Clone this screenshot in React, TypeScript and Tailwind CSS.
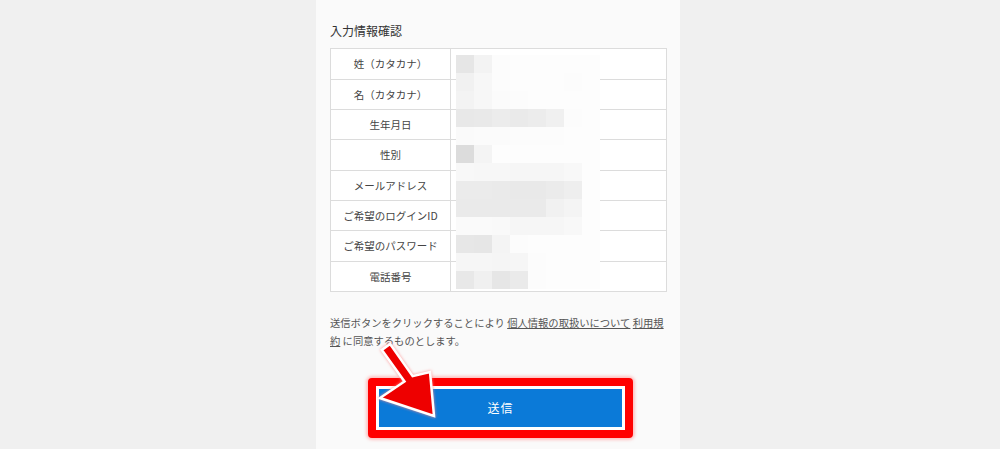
import React from "react";

const rows: { label: string; h: string }[] = [
  { label: "姓（カタカナ）", h: "h-[30px]" },
  { label: "名（カタカナ）", h: "h-[29px]" },
  { label: "生年月日", h: "h-[29px]" },
  { label: "性別", h: "h-[30px]" },
  { label: "メールアドレス", h: "h-[29px]" },
  { label: "ご希望のログインID", h: "h-[29px]" },
  { label: "ご希望のパスワード", h: "h-[30px]" },
  { label: "電話番号", h: "h-[29px]" },
];

const mosaic: string[][] = [
  ["#e6e6e6", "#f3f3f3", "#fcfcfc", "#fdfdfd", "#fdfdfd", "#fdfdfd", "#fdfdfd", "#fdfdfd"],
  ["#f1f1f1", "#f7f7f7", "#fcfcfc", "#fdfdfd", "#fdfdfd", "#fdfdfd", "#fcfcfc", "#fdfdfd"],
  ["#f3f3f3", "#f7f7f7", "#fbfbfb", "#fcfcfc", "#fdfdfd", "#fdfdfd", "#fdfdfd", "#fdfdfd"],
  ["#e8e8e8", "#e9e9e9", "#ececec", "#eaeaea", "#ececec", "#f0f0f0", "#fcfcfc", "#fdfdfd"],
  ["#fafafa", "#fbfbfb", "#fbfbfb", "#fcfcfc", "#fcfcfc", "#fcfcfc", "#fdfdfd", "#fdfdfd"],
  ["#dcdcdc", "#f4f4f4", "#fdfdfd", "#fdfdfd", "#fdfdfd", "#fdfdfd", "#fdfdfd", "#fdfdfd"],
  ["#f8f8f8", "#f7f7f7", "#f7f7f7", "#f6f6f6", "#f6f6f6", "#f6f6f6", "#f8f8f8", "#fdfdfd"],
  ["#ebebeb", "#ebebeb", "#eaeaea", "#e9e9e9", "#e9e9e9", "#ebebeb", "#eeeeee", "#fdfdfd"],
  ["#eaeaea", "#eaeaea", "#eaeaea", "#eaeaea", "#eaeaea", "#f1f1f1", "#f4f4f4", "#fdfdfd"],
  ["#fafafa", "#fafafa", "#f9f9f9", "#f6f6f6", "#f6f6f6", "#f6f6f6", "#f8f8f8", "#fdfdfd"],
  ["#e7e7e7", "#e6e6e6", "#f4f4f4", "#fcfcfc", "#fdfdfd", "#fdfdfd", "#fdfdfd", "#fdfdfd"],
  ["#f6f6f6", "#f6f6f6", "#f5f5f5", "#f6f6f6", "#fcfcfc", "#fdfdfd", "#fdfdfd", "#fdfdfd"],
  ["#e8e8e8", "#f0f0f0", "#e6e6e6", "#eaeaea", "#fcfcfc", "#fdfdfd", "#fdfdfd", "#fdfdfd"],
];

export default function App() {
  return (
    <div
      className="relative w-full h-[449px] overflow-hidden bg-[#f0f0f0]"
      style={{ fontFamily: '"Noto Sans CJK JP", "Noto Sans", sans-serif' }}
    >
      <div className="ml-[316px] w-[364px] h-full bg-[#fafafa] pt-[22px] pl-[14px] pr-[13px]">
        <h2 className="text-[12px] leading-[18px] text-[#333] mb-[8px] font-normal">
          入力情報確認
        </h2>

        <div className="relative border border-[#dcdcdc] bg-white">
          {rows.map((r, i) => (
            <div
              key={r.label}
              className={`flex ${r.h} box-content ${i < rows.length - 1 ? "border-b border-[#dcdcdc]" : ""}`}
            >
              <div className="w-[120px] border-r border-[#dcdcdc] flex items-center justify-center text-[10.5px] text-[#444]">
                {r.label}
              </div>
              <div className="flex-1" />
            </div>
          ))}
          <div className="absolute left-[125px] top-[6px] flex flex-col">
            {mosaic.map((row, ri) => (
              <div key={ri} className="flex">
                {row.map((c, ci) => (
                  <div key={ci} className="w-[18px] h-[18px]" style={{ backgroundColor: c }} />
                ))}
              </div>
            ))}
          </div>
        </div>

        <p className="mt-[22px] text-[10.3px] leading-[18px] text-[#555]">
          <span className="whitespace-nowrap">
            送信ボタンをクリックすることにより{" "}
            <span className="underline">個人情報の取扱いについて</span>{" "}
            <span className="underline">利用規</span>
          </span>
          <br />
          <span className="underline">約</span> に同意するものとします。
        </p>

        <div className="mt-[28px] ml-[38px] w-[265px] h-[60px] border-[8px] border-[#ff0000] rounded-[4px] bg-white p-[3px] shadow-[0_0_3px_2px_rgba(255,170,170,0.7)]">
          <button className="w-full h-full bg-[#0b7ad8] text-white text-[12px] tracking-[1px]">
            送信
          </button>
        </div>
      </div>

      <svg
        className="absolute left-0 top-0 pointer-events-none"
        width="1000"
        height="449"
        viewBox="0 0 1000 449"
      >
        <polygon
          points="381.9,349.9 404.5,381.5 380,398 434,416 430,372 412.6,376.1 390.1,344.1"
          fill="#ee0000"
          stroke="#ffffff"
          strokeWidth="2.5"
          strokeLinejoin="miter"
          style={{ filter: "drop-shadow(0 0 1.5px rgba(255,140,140,0.9))" }}
        />
      </svg>
    </div>
  );
}
